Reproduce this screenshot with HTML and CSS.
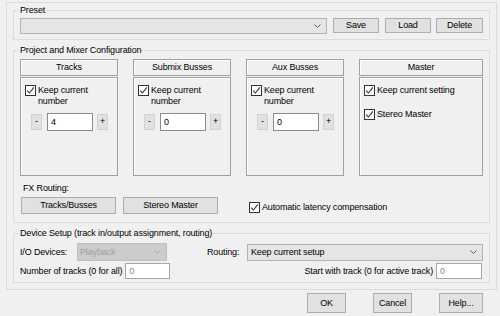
FILE: index.html
```html
<!DOCTYPE html>
<html lang="en">
<head>
    <meta charset="UTF-8">
    <meta name="viewport" content="width=device-width, initial-scale=1.0">
    <title>Project Template</title>
    <link rel="stylesheet" href="styles.css">
</head>
<body>
    <div class="dialog">
        <div class="frame">
            <!-- Preset -->
            <fieldset class="group preset-group">
                <legend>Preset</legend>
                <div class="preset-row">
                    <div class="combo preset-combo">
                        <span class="combo-text"></span>
                        <svg class="chev" width="7" height="4" viewBox="0 0 7 4"><polyline points="0.5,0.5 3.5,3.5 6.5,0.5" fill="none" stroke="#606060"/></svg>
                    </div>
                    <button class="btn btn-save">Save</button>
                    <button class="btn btn-load">Load</button>
                    <button class="btn btn-delete">Delete</button>
                </div>
            </fieldset>

            <!-- Project and Mixer Configuration -->
            <fieldset class="group mixer-group">
                <legend>Project and Mixer Configuration</legend>
                <div class="cols">
                    <div class="col">
                        <div class="col-head">Tracks</div>
                        <div class="col-body">
                            <div class="check-row">
                                <span class="check"><svg width="9" height="9" viewBox="0 0 9 9"><polyline points="1.2,4.6 3.4,7 7.9,1.4" fill="none" stroke="#333" stroke-width="1.1"/></svg></span>
                                <span>Keep current<br>number</span>
                            </div>
                            <div class="spin">
                                <span class="spin-btn">-</span>
                                <span class="num">4</span>
                                <span class="spin-btn plus">+</span>
                            </div>
                        </div>
                    </div>
                    <div class="col">
                        <div class="col-head">Submix Busses</div>
                        <div class="col-body">
                            <div class="check-row">
                                <span class="check"><svg width="9" height="9" viewBox="0 0 9 9"><polyline points="1.2,4.6 3.4,7 7.9,1.4" fill="none" stroke="#333" stroke-width="1.1"/></svg></span>
                                <span>Keep current<br>number</span>
                            </div>
                            <div class="spin">
                                <span class="spin-btn">-</span>
                                <span class="num">0</span>
                                <span class="spin-btn plus">+</span>
                            </div>
                        </div>
                    </div>
                    <div class="col">
                        <div class="col-head">Aux Busses</div>
                        <div class="col-body">
                            <div class="check-row">
                                <span class="check"><svg width="9" height="9" viewBox="0 0 9 9"><polyline points="1.2,4.6 3.4,7 7.9,1.4" fill="none" stroke="#333" stroke-width="1.1"/></svg></span>
                                <span>Keep current<br>number</span>
                            </div>
                            <div class="spin">
                                <span class="spin-btn">-</span>
                                <span class="num">0</span>
                                <span class="spin-btn plus">+</span>
                            </div>
                        </div>
                    </div>
                    <div class="col">
                        <div class="col-head">Master</div>
                        <div class="col-body">
                            <div class="check-row">
                                <span class="check"><svg width="9" height="9" viewBox="0 0 9 9"><polyline points="1.2,4.6 3.4,7 7.9,1.4" fill="none" stroke="#333" stroke-width="1.1"/></svg></span>
                                <span>Keep current setting</span>
                            </div>
                            <div class="check-row second">
                                <span class="check"><svg width="9" height="9" viewBox="0 0 9 9"><polyline points="1.2,4.6 3.4,7 7.9,1.4" fill="none" stroke="#333" stroke-width="1.1"/></svg></span>
                                <span>Stereo Master</span>
                            </div>
                        </div>
                    </div>
                </div>

                <div class="fx-label">FX Routing:</div>
                <div class="fx-row">
                    <button class="btn btn-fx">Tracks/Busses</button>
                    <button class="btn btn-fx">Stereo Master</button>
                    <div class="check-row latency">
                        <span class="check"><svg width="9" height="9" viewBox="0 0 9 9"><polyline points="1.2,4.6 3.4,7 7.9,1.4" fill="none" stroke="#333" stroke-width="1.1"/></svg></span>
                        <span>Automatic latency compensation</span>
                    </div>
                </div>
            </fieldset>

            <!-- Device Setup -->
            <fieldset class="group device-group">
                <legend>Device Setup (track in/output assignment, routing)</legend>
                <div class="dev-row">
                    <span class="dev-label io-label">I/O Devices:</span>
                    <div class="combo io-combo disabled">
                        <span class="combo-text">Playback</span>
                        <svg class="chev" width="7" height="4" viewBox="0 0 7 4"><polyline points="0.5,0.5 3.5,3.5 6.5,0.5" fill="none" stroke="#a8a8a8"/></svg>
                    </div>
                    <span class="dev-label routing-label">Routing:</span>
                    <div class="combo routing-combo">
                        <span class="combo-text">Keep current setup</span>
                        <svg class="chev" width="7" height="4" viewBox="0 0 7 4"><polyline points="0.5,0.5 3.5,3.5 6.5,0.5" fill="none" stroke="#606060"/></svg>
                    </div>
                </div>
                <div class="dev-row second">
                    <span class="dev-label count-label">Number of tracks (0 for all)</span>
                    <span class="field count-field">0</span>
                    <span class="dev-label start-label">Start with track (0 for active track)</span>
                    <span class="field start-field">0</span>
                </div>
            </fieldset>
        </div>

        <div class="footer">
            <button class="btn btn-ok">OK</button>
            <button class="btn btn-cancel">Cancel</button>
            <button class="btn btn-help">Help...</button>
        </div>
    </div>
</body>
</html>
```

FILE: styles.css
```css
/* reset */
* {
    margin: 0;
    padding: 0;
    box-sizing: border-box;
}

body {
    background: #f0f0f0;
    font-family: "Liberation Sans", Arial, sans-serif;
    font-size: 9px;
    letter-spacing: -0.15px;
    color: #000;
}

.dialog {
    width: 500px;
    height: 316px;
    padding: 2px 0 0 6px;
}

/* outer etched frame */
.frame {
    width: 491px;
    height: 288px;
    border: 1px solid #dcdcdc;
    padding: 0 6px;
}

/* group boxes */
.group {
    border: 1px solid #dcdcdc;
    min-width: 0;
    padding: 0 6px;
}

.group legend {
    padding: 0 1px;
    margin-left: -1px;
    line-height: 13px;
}

.preset-group {
    margin-top: 1px;
    padding-top: 1px;
    padding-bottom: 5px;
}

.mixer-group {
    margin-top: 4px;
    padding-top: 2px;
    padding-bottom: 8px;
}

.device-group {
    margin-top: 4px;
    padding-top: 3px;
    padding-bottom: 3px;
}

/* buttons */
.btn {
    font: inherit;
    letter-spacing: inherit;
    color: #000;
    background: #e1e1e1;
    border: 1px solid #adadad;
    height: 15px;
    line-height: 13px;
    text-align: center;
}

/* combo boxes */
.combo {
    display: flex;
    align-items: center;
    height: 16px;
    background: #e5e5e5;
    border: 1px solid #b4b4b4;
    padding: 0 5px 0 3px;
}

.combo-text {
    flex: 1;
    line-height: 14px;
}

.combo.disabled {
    background: #cccccc;
    border-color: #bfbfbf;
    color: #a0a0a0;
}

/* preset row */
.preset-row {
    display: flex;
    align-items: flex-start;
}

.preset-combo {
    width: 307px;
}

.btn-save {
    width: 46px;
    margin-left: 6px;
}

.btn-load {
    width: 46px;
    margin-left: 6px;
}

.btn-delete {
    width: 47px;
    margin-left: 5px;
}

/* mixer columns */
.cols {
    display: grid;
    grid-template-columns: 98px 98px 98px 1fr;
    column-gap: 15px;
}

.col {
    display: flex;
    flex-direction: column;
    gap: 1px;
}

.col-head {
    height: 17px;
    border: 1px solid #a0a0a0;
    box-shadow: inset 1px 1px 0 #fff;
    text-align: center;
    line-height: 15px;
}

.col-body {
    height: 99px;
    border: 1px solid #a0a0a0;
    box-shadow: inset 1px 1px 0 #fff;
    padding: 7px 4px 0;
}

.check-row {
    display: flex;
    align-items: flex-start;
    gap: 2px;
    line-height: 11px;
}

.check-row.second {
    margin-top: 13px;
}

.check {
    flex: none;
    width: 11px;
    height: 11px;
    background: #fff;
    border: 1px solid #333;
    display: flex;
    align-items: center;
    justify-content: center;
}

.spin {
    display: flex;
    align-items: center;
    margin-top: 6px;
    padding-left: 6px;
}

.spin-btn {
    width: 11px;
    height: 16px;
    background: #e1e1e1;
    border: 1px solid #d2d2d2;
    text-align: center;
    line-height: 13px;
}

.spin-btn.plus {
    margin-left: 4px;
}

.num {
    width: 46px;
    height: 18px;
    margin-left: 5px;
    background: #fff;
    border: 1px solid #8c8c8c;
    padding-left: 3px;
    line-height: 16px;
}

/* fx routing */
.fx-label {
    margin-top: 6px;
    padding-left: 3px;
    line-height: 13px;
}

.fx-row {
    display: flex;
    align-items: flex-start;
    margin-top: 2px;
    padding-left: 1px;
}

.btn-fx {
    width: 95px;
    height: 17px;
    line-height: 15px;
}

.btn-fx + .btn-fx {
    margin-left: 7px;
}

.latency {
    margin-left: 31px;
    margin-top: 5px;
}

/* device setup */
.dev-row {
    display: flex;
    align-items: center;
    height: 18px;
}

.dev-row.second {
    height: 16px;
    margin-top: 2px;
}

.dev-label {
    line-height: 13px;
    white-space: nowrap;
}

.io-label {
    width: 57px;
}

.io-combo {
    width: 90px;
    height: 18px;
    padding-left: 2px;
}

.routing-label {
    width: 40px;
    margin-left: 40px;
}

.routing-combo {
    flex: 1;
    height: 17px;
}

.count-label {
    flex: none;
    margin-right: 3px;
}

.field {
    height: 16px;
    background: #fff;
    border: 1px solid #a8a8a8;
    color: #8a8a8a;
    padding-left: 3px;
    line-height: 14px;
}

.count-field {
    width: 45px;
}

.start-label {
    margin-left: auto;
    margin-right: 3px;
}

.start-field {
    width: 46px;
    margin-right: 1px;
}

/* bottom buttons */
.footer {
    display: flex;
    justify-content: flex-end;
    margin-top: 3px;
    padding-right: 17px;
}

.footer .btn {
    height: 20px;
    line-height: 18px;
}

.btn-ok,
.btn-cancel {
    width: 39px;
}

.btn-cancel {
    margin-left: 27px;
}

.btn-help {
    width: 44px;
    margin-left: 27px;
}
```
